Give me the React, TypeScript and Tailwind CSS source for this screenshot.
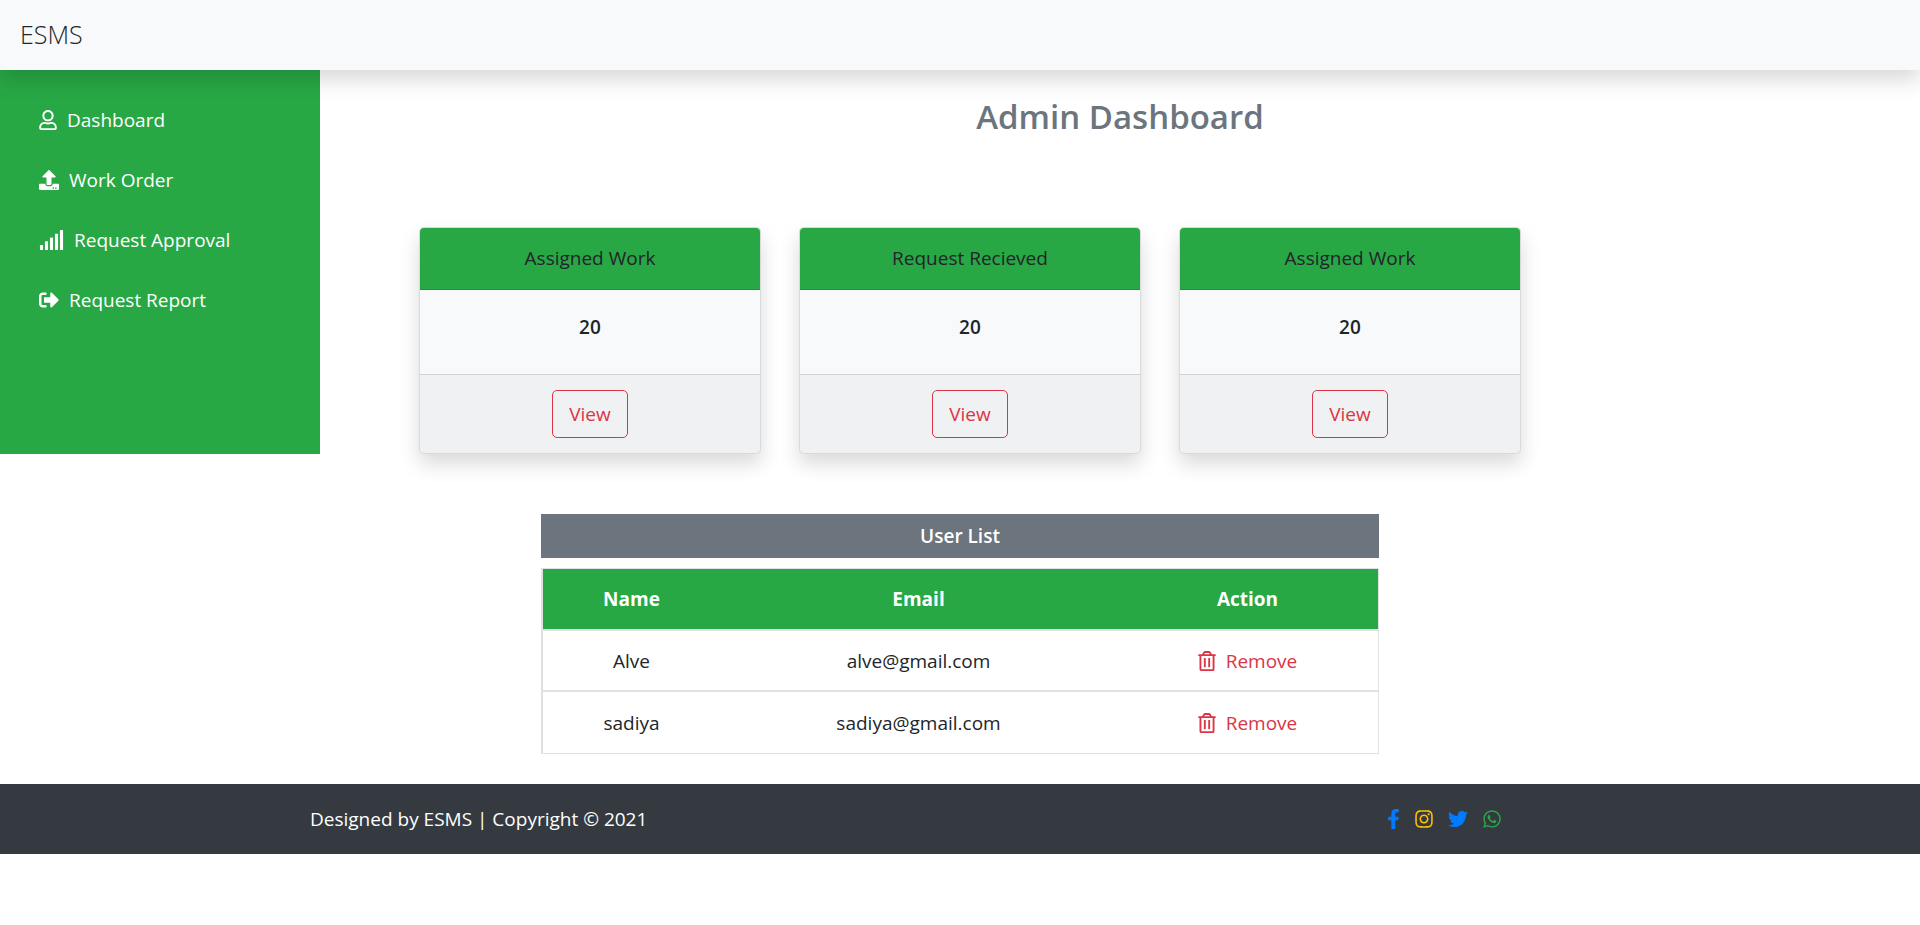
import type { IconType } from "react-icons";
import {
  FaFacebookF,
  FaInstagram,
  FaRegTrashAlt,
  FaRegUser,
  FaSignal,
  FaSignOutAlt,
  FaTwitter,
  FaUpload,
  FaWhatsapp,
} from "react-icons/fa";

const navItems: { label: string; icon: IconType; size: string }[] = [
  { label: "Dashboard", icon: FaRegUser, size: "h-5 w-[18px]" },
  { label: "Work Order", icon: FaUpload, size: "h-5 w-5" },
  { label: "Request Approval", icon: FaSignal, size: "h-5 w-[25px]" },
  { label: "Request Report", icon: FaSignOutAlt, size: "h-5 w-5" },
];

const stats = [
  { title: "Assigned Work", value: 20 },
  { title: "Request Recieved", value: 20 },
  { title: "Assigned Work", value: 20 },
];

const users = [
  { name: "Alve", email: "alve@gmail.com" },
  { name: "sadiya", email: "sadiya@gmail.com" },
];

const socials: { label: string; icon: IconType; style: string }[] = [
  { label: "Facebook", icon: FaFacebookF, style: "h-5 w-[13px] text-[#007bff]" },
  { label: "Instagram", icon: FaInstagram, style: "h-5 w-5 text-[#ffc107]" },
  { label: "Twitter", icon: FaTwitter, style: "h-5 w-5 text-[#007bff]" },
  { label: "WhatsApp", icon: FaWhatsapp, style: "h-5 w-5 text-[#28a745]" },
];

function StatCard({ title, value }: { title: string; value: number }) {
  return (
    <section className="overflow-hidden rounded-[5px] border border-black/12 bg-[#f8f9fa] text-center shadow-[0_10px_20px_rgba(0,0,0,0.15)]">
      <h2 className="border-b border-black/12 bg-[#28a745] pt-[15px] pb-4 leading-[30px]">{title}</h2>
      <p className="pt-[22px] pb-8 leading-[30px] font-semibold">{value}</p>
      <div className="border-t border-black/12 bg-black/3 py-[15px]">
        <button
          type="button"
          className="rounded-[5px] border border-[#dc3545] px-4 py-2 leading-[30px] text-[#dc3545]"
        >
          View
        </button>
      </div>
    </section>
  );
}

export default function App() {
  return (
    <div className="bg-white font-['Open_Sans','Noto_Sans',sans-serif] text-[19px] text-[#212529]">
      <header className="relative z-10 flex h-[70px] items-center bg-[#f8f9fa] px-5 shadow-[0_10px_20px_rgba(0,0,0,0.15)]">
        <a href="#" className="text-[25px] font-light">
          ESMS
        </a>
      </header>

      <div className="flex">
        <nav className="w-1/6 bg-[#28a745] pt-5">
          <ul>
            {navItems.map(({ label, icon: Icon, size }) => (
              <li key={label}>
                <a href="#" className="flex items-center gap-2.5 px-[39px] py-[15px] leading-[30px] text-white">
                  <Icon className={size} />
                  {label}
                </a>
              </li>
            ))}
          </ul>
        </nav>

        <main className="flex-1 pt-[26px]">
          <h1 className="text-center text-[33px] leading-[42px] font-semibold text-[#6c757d]">Admin Dashboard</h1>
          <div className="mt-[89px] ml-[5%] grid max-w-[1140px] grid-cols-3 gap-[38px] px-[19px]">
            {stats.map((s, i) => (
              <StatCard key={i} {...s} />
            ))}
          </div>
        </main>
      </div>

      <section className="mx-auto mt-[60px] max-w-[838px]">
        <h2 className="bg-[#6c757d] py-[7px] text-center leading-[30px] font-semibold text-white">User List</h2>
        <table className="mt-2.5 w-full table-fixed border-separate border-spacing-0 border border-l-2 border-[#dee2e6] text-center">
          <colgroup>
            <col className="w-[177px]" />
            <col className="w-[397px]" />
            <col />
          </colgroup>
          <thead>
            <tr className="h-[62px] bg-[#28a745] leading-[30px] text-white">
              <th className="border-b-2 border-[#dee2e6] font-bold">Name</th>
              <th className="border-b-2 border-[#dee2e6] font-bold">Email</th>
              <th className="border-b-2 border-[#dee2e6] font-bold">Action</th>
            </tr>
          </thead>
          <tbody className="leading-[30px] [&>tr:not(:last-child)>td]:border-b-2">
            {users.map((u) => (
              <tr key={u.name} className="h-[61px]">
                <td className="border-[#dee2e6]">{u.name}</td>
                <td className="border-[#dee2e6]">{u.email}</td>
                <td className="border-[#dee2e6]">
                  <button type="button" className="mx-auto flex items-center gap-2.5 text-[#dc3545]">
                    <FaRegTrashAlt className="h-5 w-[18px]" />
                    Remove
                  </button>
                </td>
              </tr>
            ))}
          </tbody>
        </table>
      </section>

      <footer className="mt-[30px] bg-[#343a40] text-white">
        <div className="mx-auto flex h-[70px] w-full max-w-[1300px] items-center justify-between pr-[108px]">
          <p>Designed by ESMS | Copyright © 2021</p>
          <div className="flex items-center gap-[14px]">
            {socials.map(({ label, icon: Icon, style }) => (
              <a key={label} href="#" aria-label={label}>
                <Icon className={style} />
              </a>
            ))}
          </div>
        </div>
      </footer>
    </div>
  );
}
